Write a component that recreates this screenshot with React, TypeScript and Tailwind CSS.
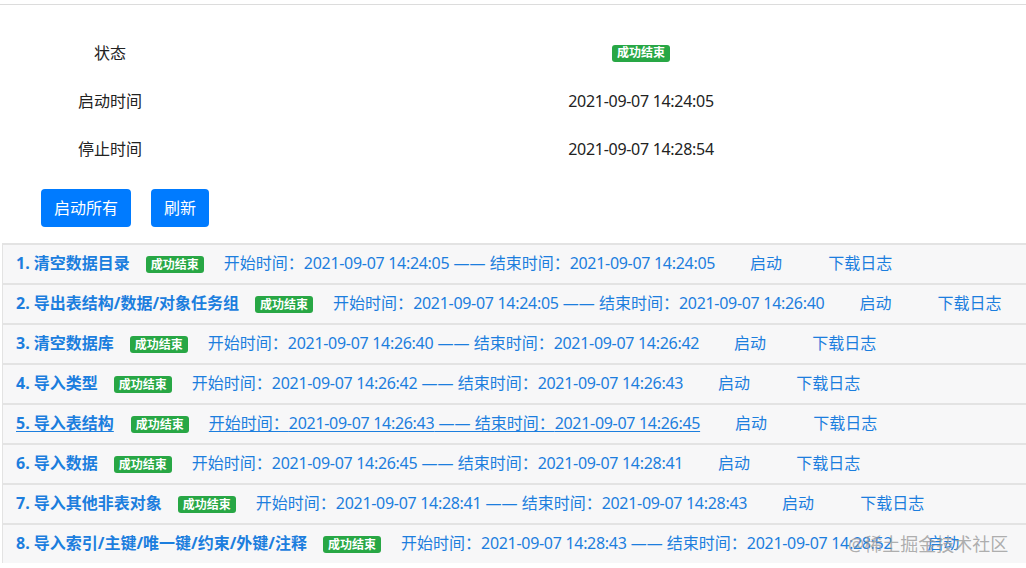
import React from 'react';

type Task = {
    name: string
    start: string
    end: string
}

const tasks: Task[] = [
    {name: '1. 清空数据目录', start: '2021-09-07 14:24:05', end: '2021-09-07 14:24:05'},
    {name: '2. 导出表结构/数据/对象任务组', start: '2021-09-07 14:24:05', end: '2021-09-07 14:26:40'},
    {name: '3. 清空数据库', start: '2021-09-07 14:26:40', end: '2021-09-07 14:26:42'},
    {name: '4. 导入类型', start: '2021-09-07 14:26:42', end: '2021-09-07 14:26:43'},
    {name: '5. 导入表结构', start: '2021-09-07 14:26:43', end: '2021-09-07 14:26:45'},
    {name: '6. 导入数据', start: '2021-09-07 14:26:45', end: '2021-09-07 14:28:41'},
    {name: '7. 导入其他非表对象', start: '2021-09-07 14:28:41', end: '2021-09-07 14:28:43'},
    {name: '8. 导入索引/主键/唯一键/约束/外键/注释', start: '2021-09-07 14:28:43', end: '2021-09-07 14:28:52'},
]

function Badge() {
    return (
        <span className="inline-flex items-center align-middle h-[17px] px-[5px] rounded-[3px] bg-[#28a745] text-white text-[12px] font-bold leading-none">
            成功结束
        </span>
    )
}

function Time({value}: { value: string }) {
    return <span className="tracking-[-0.3px]">{value}</span>
}

function TaskRow({task, hover}: { task: Task, hover: boolean }) {
    return (
        <div className="h-[40px] overflow-hidden pl-[13px] bg-[#f7f7f8] border-t-2 border-l border-[#e3e3e3] text-[#1c7ede] text-[16px] leading-[37px]">
            <span className={"font-bold whitespace-nowrap " + (hover ? "underline underline-offset-2 pr-[17px]" : "pr-4")}>{task.name}</span>
            <Badge/>
            <span className={"ml-5 whitespace-nowrap " + (hover ? "underline underline-offset-2" : "")}>
                开始时间：<Time value={task.start}/> —— 结束时间：<Time value={task.end}/>
            </span>
            <wbr/>
            <span className="ml-[35px] whitespace-nowrap">启动</span>
            <wbr/>
            <span className="ml-[46px] whitespace-nowrap">下载日志</span>
        </div>
    )
}

export default function App() {
    return (
        <div className="relative w-[1026px] h-[568px] overflow-hidden bg-white text-[#222]"
             style={{fontFamily: '"Noto Sans", "Noto Sans CJK SC", sans-serif'}}>
            <div className="mt-[4px] border-t border-[#dcdcdc]"/>
            <div className="pt-[24px] text-[16px]">
                <div className="flex items-center h-[48px]">
                    <div className="w-[220px] text-center">状态</div>
                    <div className="w-[770px] ml-[36px] flex justify-center"><Badge/></div>
                </div>
                <div className="flex items-center h-[48px]">
                    <div className="w-[220px] text-center">启动时间</div>
                    <div className="w-[770px] ml-[36px] text-center"><Time value="2021-09-07 14:24:05"/></div>
                </div>
                <div className="flex items-center h-[48px]">
                    <div className="w-[220px] text-center">停止时间</div>
                    <div className="w-[770px] ml-[36px] text-center"><Time value="2021-09-07 14:28:54"/></div>
                </div>
            </div>
            <div className="flex gap-5 pl-[41px] mt-[16px]">
                <button className="h-[38px] px-[13px] rounded bg-[#007bff] text-white text-[16px]">启动所有</button>
                <button className="h-[38px] px-[13px] rounded bg-[#007bff] text-white text-[16px]">刷新</button>
            </div>
            <div className="mt-[16px] ml-[2px] w-[1024px] rounded-tl">
                {tasks.map((t, i) => <TaskRow key={i} task={t} hover={i === 4}/>)}
            </div>
            <div className="absolute left-[848px] top-[531px] text-[18px] text-[#9a9a9a]/80 whitespace-nowrap">@稀土掘金技术社区</div>
        </div>
    );
}
